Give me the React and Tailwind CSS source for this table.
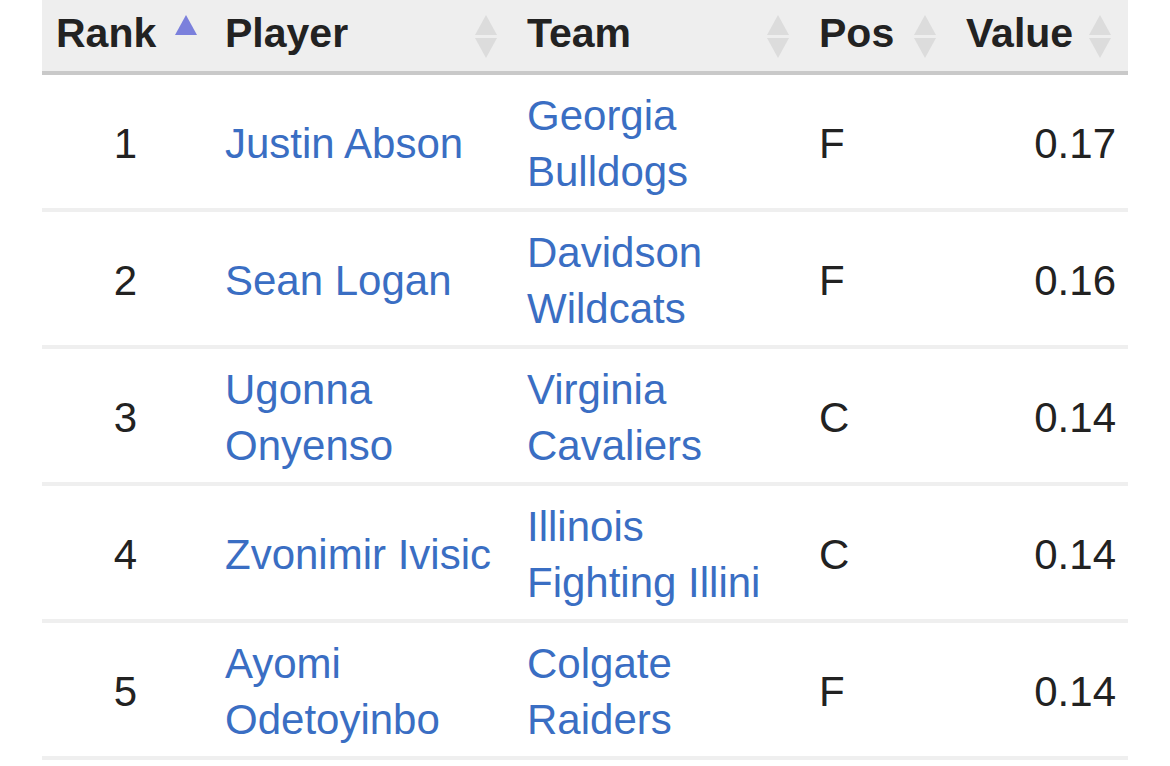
import React from "react";

const rows = [
  { rank: 1, player: ["Justin Abson"], team: ["Georgia", "Bulldogs"], pos: "F", value: "0.17" },
  { rank: 2, player: ["Sean Logan"], team: ["Davidson", "Wildcats"], pos: "F", value: "0.16" },
  { rank: 3, player: ["Ugonna", "Onyenso"], team: ["Virginia", "Cavaliers"], pos: "C", value: "0.14" },
  { rank: 4, player: ["Zvonimir Ivisic"], team: ["Illinois", "Fighting Illini"], pos: "C", value: "0.14" },
  { rank: 5, player: ["Ayomi", "Odetoyinbo"], team: ["Colgate", "Raiders"], pos: "F", value: "0.14" },
];

const SortIcon = ({ active }) => (
  <svg width="26" height="46" viewBox="0 0 26 46" className="shrink-0">
    <polygon points="13,1 24,21 2,21" fill={active ? "#7b80dc" : "#dcdcdc"} />
    {!active && <polygon points="2,24 24,24 13,44" fill="#dcdcdc" />}
  </svg>
);

const Link = ({ lines }) => (
  <a href="#" className="text-[#3a6ec3] no-underline">
    {lines.map((l, i) => (
      <div key={i}>{l}</div>
    ))}
  </a>
);

const App = () => {
  const cols = "grid grid-cols-[170px_302px_292px_147px_175px]";

  return (
    <div className="w-[1170px] h-[766px] bg-white overflow-hidden pl-[42px] text-[42px] leading-[56px] text-[#222]" style={{ fontFamily: '"Liberation Sans", Arial, sans-serif' }}>
      <div className="w-[1086px]">
        <div className={`${cols} h-[75px] bg-[#eeeeee] border-b-4 border-[#c9c9c9] font-bold text-[41px]`}>
          {[
            { t: "Rank", active: true, pl: "pl-[14px]", gap: "gap-[17px] justify-start" },
            { t: "Player" },
            { t: "Team" },
            { t: "Pos" },
            { t: "Value" },
          ].map((h, i) => (
            <div key={i} className={`flex items-start pt-[5px] pr-[15px] ${h.pl || "pl-[13px]"} ${h.gap || "justify-between"}`}>
              <span>{h.t}</span>
              <div className="mt-[9px]">
                <SortIcon active={h.active} />
              </div>
            </div>
          ))}
        </div>

        {rows.map((r) => (
          <div key={r.rank} className={`${cols} h-[137px] pt-[4px] border-b-4 border-[#efefef] items-center`}>
            <div className="text-right pr-[75px]">{r.rank}</div>
            <div className="pl-[13px]">
              <Link lines={r.player} />
            </div>
            <div className="pl-[13px]">
              <Link lines={r.team} />
            </div>
            <div className="pl-[13px]">{r.pos}</div>
            <div className="text-right pr-[12px]">{r.value}</div>
          </div>
        ))}
      </div>
    </div>
  );
};

export default App;
